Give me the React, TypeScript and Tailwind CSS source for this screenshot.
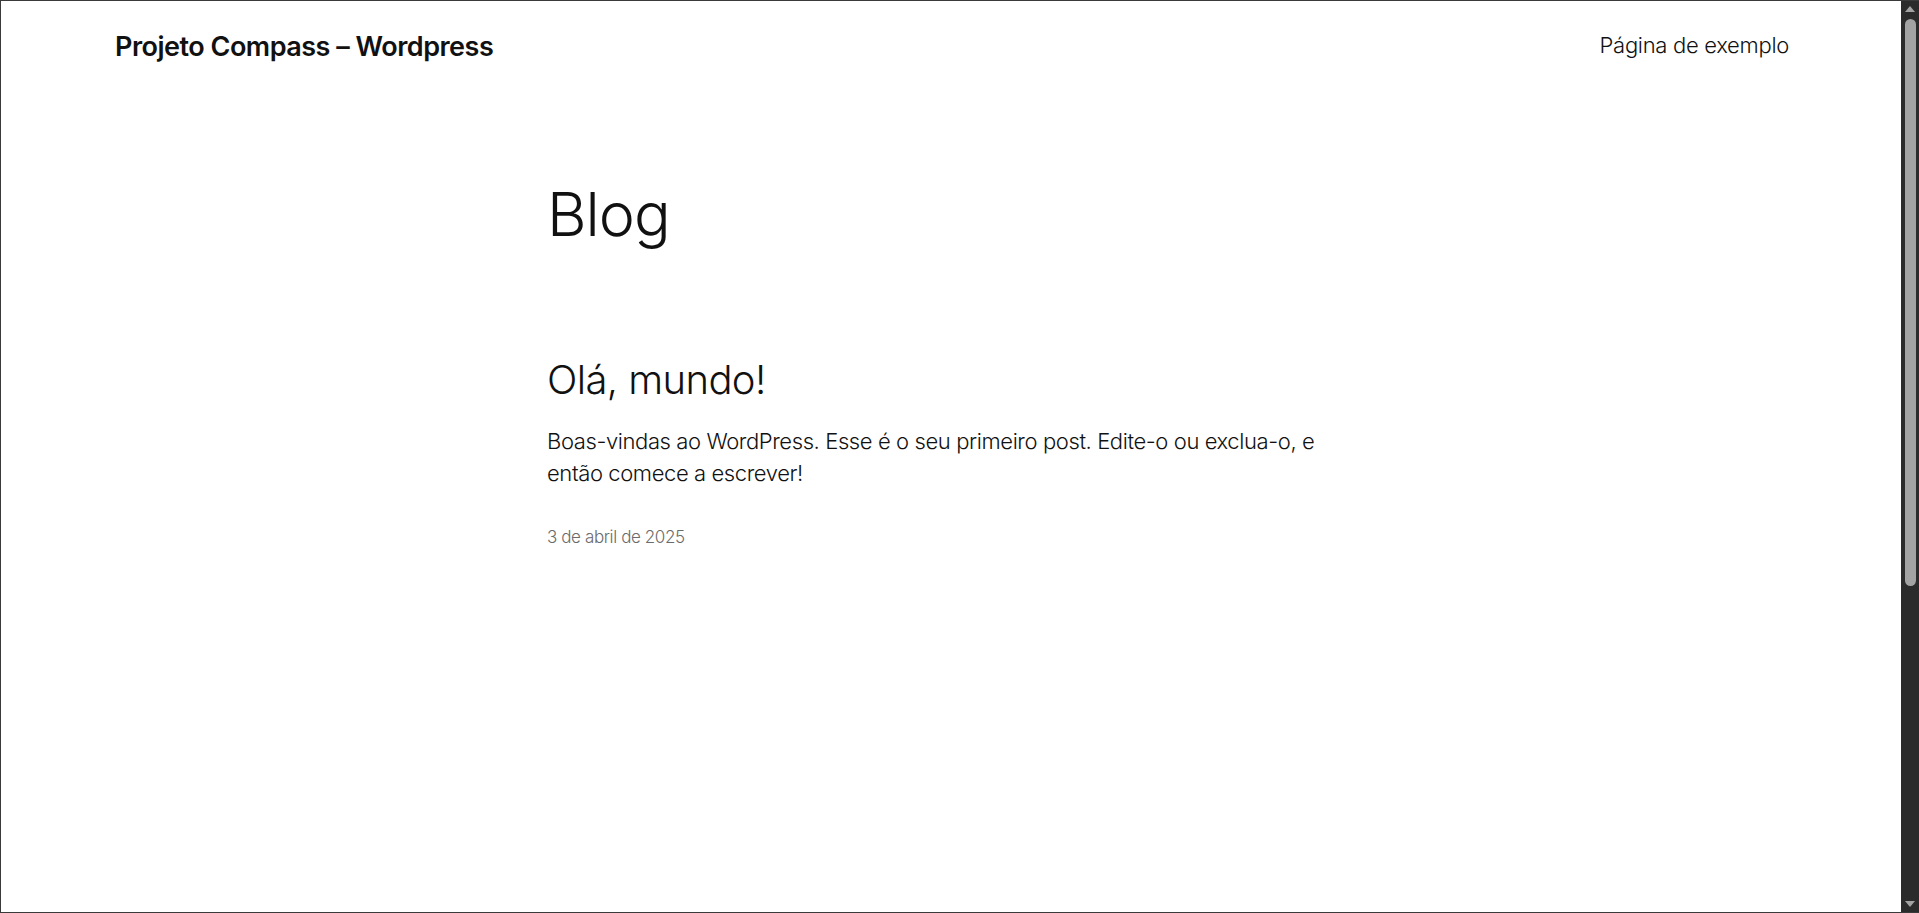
const Header = () => {
  return (
    <header className="flex items-center justify-between pl-[114px] pr-[112px] pt-[32px]">
      <a href="#" className="text-[27px] font-semibold tracking-[-0.5px] text-[#111111] leading-none">
        Projeto Compass – Wordpress
      </a>
      <nav>
        <a href="#" className="text-[22px] font-light tracking-[-0.3px] text-[#111111] leading-none">
          Página de exemplo
        </a>
      </nav>
    </header>
  );
};

const Post = () => {
  return (
    <article className="mt-[115px]">
      <h2 className="text-[40px] font-light leading-none tracking-[-0.6px] text-[#111111]">
        Olá, mundo!
      </h2>
      <p className="mt-[25px] text-[22px] font-light leading-[32px] tracking-[-0.4px] text-[#111111]">
        <span className="block whitespace-nowrap">
          Boas-vindas ao WordPress. Esse é o seu primeiro post. Edite-o ou exclua-o, e
        </span>
        <span className="block">então comece a escrever!</span>
      </p>
      <p className="mt-[36px] text-[17px] font-light tracking-[-0.4px] text-[#6b6b6b]">
        3 de abril de 2025
      </p>
    </article>
  );
};

const Scrollbar = () => {
  return (
    <div className="flex w-[18px] shrink-0 flex-col items-center bg-[#2b2b2b] py-[4px]">
      <svg width="12" height="8" viewBox="0 0 12 8" className="shrink-0">
        <polygon points="6,1 11,7 1,7" fill="#a3a3a3" />
      </svg>
      <div className="mt-[6px] h-[567px] w-[11px] rounded-full bg-[#a3a3a3]" />
      <div className="flex-1" />
      <svg width="12" height="8" viewBox="0 0 12 8" className="shrink-0">
        <polygon points="1,1 11,1 6,7" fill="#a3a3a3" />
      </svg>
    </div>
  );
};

export default function App() {
  return (
    <div
      className="flex h-[913px] w-full overflow-hidden border-y border-l border-[#3a3a3a] bg-white"
      style={{ fontFamily: "Inter, 'Noto Sans', sans-serif" }}
    >
      <div className="flex-1">
        <Header />
        <main className="pl-[546px]">
          <h1 className="mt-[124px] text-[61px] font-light leading-none tracking-[-1px] text-[#111111]">
            Blog
          </h1>
          <Post />
        </main>
      </div>
      <Scrollbar />
    </div>
  );
}
